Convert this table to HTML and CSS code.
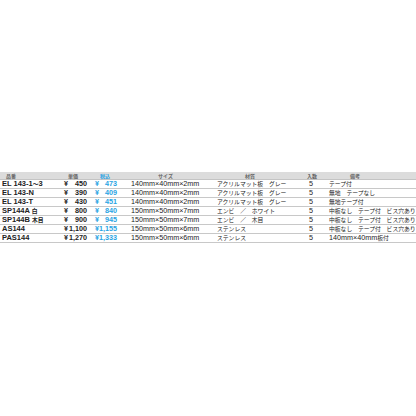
FILE: index.html
```html
<!DOCTYPE html>
<html lang="ja">
<head>
<meta charset="utf-8">
<link rel="stylesheet" href="styles.css">
</head>
<body>
<table class="spec">
  <colgroup>
    <col class="w-code"><col class="w-price"><col class="w-tax"><col class="w-size"><col class="w-mat"><col class="w-qty"><col class="w-note">
  </colgroup>
  <thead>
    <tr>
      <th class="h-code">品番</th>
      <th class="h-price">単価</th>
      <th class="h-tax">税込</th>
      <th class="h-size">サイズ</th>
      <th class="h-mat">材質</th>
      <th class="h-qty">入数</th>
      <th class="h-note">備考</th>
    </tr>
  </thead>
  <tbody>
    <tr>
      <td class="code">EL 143-1<span class="ja">～</span>3</td>
      <td class="price"><div class="yen"><span>¥</span><span>450</span></div></td>
      <td class="tax"><div class="yen"><span>¥</span><span>473</span></div></td>
      <td class="size">140mm×40mm×2mm</td>
      <td class="mat"><span class="ja">アクリルマット板　グレー</span></td>
      <td class="qty">5</td>
      <td class="note"><span class="ja">テープ付</span></td>
    </tr>
    <tr>
      <td class="code">EL 143-N</td>
      <td class="price"><div class="yen"><span>¥</span><span>390</span></div></td>
      <td class="tax"><div class="yen"><span>¥</span><span>409</span></div></td>
      <td class="size">140mm×40mm×2mm</td>
      <td class="mat"><span class="ja">アクリルマット板　グレー</span></td>
      <td class="qty">5</td>
      <td class="note"><span class="ja">無地　テープなし</span></td>
    </tr>
    <tr>
      <td class="code">EL 143-T</td>
      <td class="price"><div class="yen"><span>¥</span><span>430</span></div></td>
      <td class="tax"><div class="yen"><span>¥</span><span>451</span></div></td>
      <td class="size">140mm×40mm×2mm</td>
      <td class="mat"><span class="ja">アクリルマット板　グレー</span></td>
      <td class="qty">5</td>
      <td class="note"><span class="ja">無地テープ付</span></td>
    </tr>
    <tr>
      <td class="code">SP144A <span class="ja">白</span></td>
      <td class="price"><div class="yen"><span>¥</span><span>800</span></div></td>
      <td class="tax"><div class="yen"><span>¥</span><span>840</span></div></td>
      <td class="size">150mm×50mm×7mm</td>
      <td class="mat"><span class="ja">エンビ　／　ホワイト</span></td>
      <td class="qty">5</td>
      <td class="note"><span class="ja">中板なし　テープ付　ビス穴あり</span></td>
    </tr>
    <tr>
      <td class="code">SP144B <span class="ja">木目</span></td>
      <td class="price"><div class="yen"><span>¥</span><span>900</span></div></td>
      <td class="tax"><div class="yen"><span>¥</span><span>945</span></div></td>
      <td class="size">150mm×50mm×7mm</td>
      <td class="mat"><span class="ja">エンビ　／　木目</span></td>
      <td class="qty">5</td>
      <td class="note"><span class="ja">中板なし　テープ付　ビス穴あり</span></td>
    </tr>
    <tr>
      <td class="code">AS144</td>
      <td class="price"><div class="yen"><span>¥</span><span>1,100</span></div></td>
      <td class="tax"><div class="yen"><span>¥</span><span>1,155</span></div></td>
      <td class="size">150mm×50mm×6mm</td>
      <td class="mat"><span class="ja">ステンレス</span></td>
      <td class="qty">5</td>
      <td class="note"><span class="ja">中板なし　テープ付　ビス穴あり</span></td>
    </tr>
    <tr>
      <td class="code">PAS144</td>
      <td class="price"><div class="yen"><span>¥</span><span>1,270</span></div></td>
      <td class="tax"><div class="yen"><span>¥</span><span>1,333</span></div></td>
      <td class="size">150mm×50mm×6mm</td>
      <td class="mat"><span class="ja">ステンレス</span></td>
      <td class="qty">5</td>
      <td class="note">140mm×40mm<span class="ja">板付</span></td>
    </tr>
  </tbody>
</table>
</body>
</html>
```

FILE: styles.css
```css
html, body {
  margin: 0;
  padding: 0;
  background: #ffffff;
}

body {
  padding-top: 172px;
  font-family: "Liberation Sans", "Noto Sans CJK JP", sans-serif;
  color: #222222;
}

.spec {
  width: 416px;
  border-collapse: collapse;
  table-layout: fixed;
}

.w-code { width: 60px; }
.w-price { width: 31px; }
.w-tax { width: 30px; }
.w-size { width: 89px; }
.w-mat { width: 90px; }
.w-qty { width: 22px; }
.w-note { width: 94px; }

.spec th {
  height: 7px;
  padding: 0;
  background: #dcdcdc;
  font-family: "Noto Sans CJK JP", sans-serif;
  font-size: 5px;
  line-height: 7px;
  font-weight: 700;
  color: #666666;
  text-align: center;
  border-bottom: 1px solid #c4c4c4;
}

.spec .h-code { text-align: left; padding-left: 6px; }
.spec .h-price { text-align: left; padding-left: 8px; }
.spec .h-tax { text-align: left; padding-left: 9px; color: #29a3e3; }
.spec .h-mat { text-align: left; padding-left: 35px; }
.spec .h-qty { text-align: center; padding-left: 2px; }
.spec .h-note { text-align: left; padding-left: 28px; }

.spec td {
  height: 8px;
  padding: 0;
  font-size: 7.2px;
  line-height: 8px;
  white-space: nowrap;
  overflow: hidden;
  border-bottom: 1px solid #c8c8c8;
  vertical-align: middle;
}

.ja {
  font-family: "Noto Sans CJK JP", sans-serif;
  font-size: 5.8px;
}

.spec .code {
  padding-left: 2px;
  font-weight: 700;
  font-size: 7.5px;
}

.spec .code .ja {
  font-weight: 700;
}

.spec .price,
.spec .tax {
  font-weight: 700;
  font-size: 7.2px;
}

.yen {
  display: flex;
  justify-content: space-between;
  white-space: nowrap;
}

.spec .price {
  padding: 0 4px 0 4px;
}

.spec .tax {
  padding: 0 4px 0 4px;
  color: #29a3e3;
}

.spec .size {
  padding-left: 10px;
}

.spec .mat {
  padding-left: 7px;
}

.spec .qty {
  text-align: center;
}

.spec .note {
  padding-left: 7px;
}
```
